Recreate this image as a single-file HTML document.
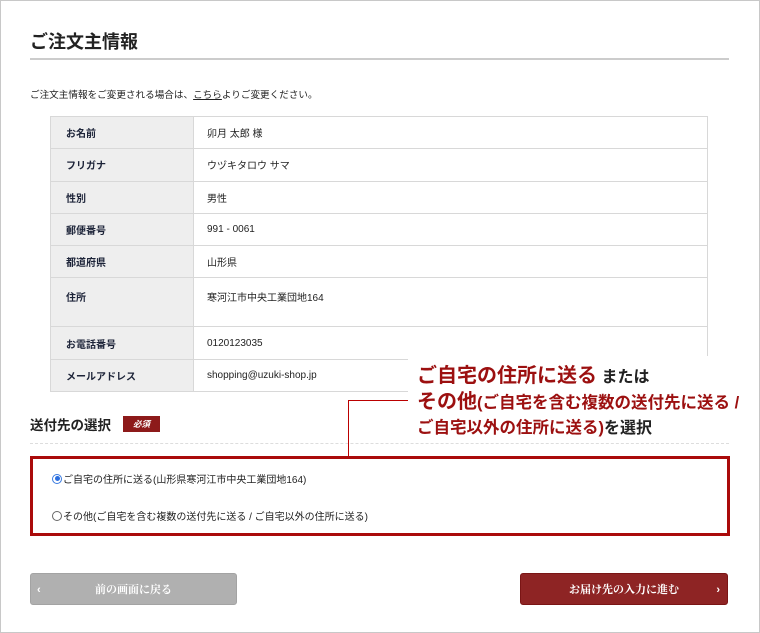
<!DOCTYPE html>
<html><head><meta charset="utf-8"><style>
*{margin:0;padding:0;box-sizing:border-box}
body{width:760px;height:633px;background:#fff;font-family:"Liberation Sans","Noto Sans CJK JP",sans-serif;color:#222;position:relative;overflow:hidden}
.frame{position:absolute;left:0;top:0;width:760px;height:633px;border:1px solid #c8c8c8}
h1{position:absolute;left:30px;top:28px;font-size:18px;font-weight:bold;color:#222}
.hr{position:absolute;left:30px;top:58px;width:699px;height:2px;background:#ccc}
.note{position:absolute;left:30px;top:87px;font-size:9.6px}
.note u{text-decoration:underline}
table{position:absolute;left:50px;top:116px;width:658px;border-collapse:collapse;font-size:10px}
td{border:1px solid #d8d8d8;height:32.3px;padding:0 0 0 13px;vertical-align:middle}
td.l{width:143px;background:#eee;font-weight:bold;color:#1c2338;padding-left:15px;font-size:10px}
tr.tall td{height:49px;vertical-align:top;padding-top:11px}
.callout{position:absolute;left:408px;top:356px;width:310px;height:86px;background:#fff}
.ct{position:absolute;left:417px;top:364px;font-weight:bold;color:#9c1010;line-height:25px;white-space:nowrap}
.ct .b{font-size:20px}
.ct .s{font-size:16.5px}
.ct .k{color:#222;font-size:16px}
.sec{position:absolute;left:30px;top:414px;font-size:13.5px;font-weight:bold}
.badge{position:absolute;left:123px;top:416px;width:37px;height:16px;background:#8d1a1a;color:#fff;font-size:8.5px;font-weight:bold;text-align:center;line-height:16px;font-style:italic}
.dash{position:absolute;left:30px;top:443px;width:699px;border-top:1px dashed #ddd}
.box{position:absolute;left:30px;top:456px;width:700px;height:80px;border:3px solid #aa0a0a}
.vl{position:absolute;left:348px;top:400px;width:1px;height:57px;background:#b00}
.hl{position:absolute;left:348px;top:400px;width:60px;height:1px;background:#b00}
.opt{position:absolute;left:52px;font-size:10px;display:flex;align-items:center}
.rad{width:10px;height:10px;border:1px solid #666;border-radius:50%;margin-right:1px;position:relative;background:#fff}
.rad.on{border-color:#3a7be0}
.rad.on::after{content:"";position:absolute;left:1.5px;top:1.5px;width:5px;height:5px;border-radius:50%;background:#2a6ee0}
.btn{position:absolute;top:573px;height:32px;border-radius:3px;color:#fff;font-family:"Liberation Serif","Noto Serif CJK SC",serif;font-weight:bold;font-size:11px;text-align:center;line-height:32px}
.back{left:30px;width:207px;background:#b0b0b0;border:1px solid #a3a3a3}
.next{left:520px;width:208px;background:#8e2424;border:1px solid #7a1515}
.arr{position:absolute;top:0;font-size:11px;font-family:"Liberation Sans",sans-serif}
</style></head><body>
<div class="frame"></div>
<h1>ご注文主情報</h1>
<div class="hr"></div>
<div class="note">ご注文主情報をご変更される場合は、<u>こちら</u>よりご変更ください。</div>
<table>
<tr><td class="l">お名前</td><td>卯月 太郎 様</td></tr>
<tr><td class="l">フリガナ</td><td>ウヅキタロウ サマ</td></tr>
<tr><td class="l">性別</td><td>男性</td></tr>
<tr><td class="l">郵便番号</td><td>991 - 0061</td></tr>
<tr><td class="l">都道府県</td><td>山形県</td></tr>
<tr class="tall"><td class="l">住所</td><td>寒河江市中央工業団地164</td></tr>
<tr><td class="l">お電話番号</td><td>0120123035</td></tr>
<tr><td class="l">メールアドレス</td><td>shopping@uzuki-shop.jp</td></tr>
</table>
<div class="callout"></div>
<div class="ct"><span class="b">ご自宅の住所に送る</span> <span class="k">または</span><br><span class="b">その他</span><span class="s">(ご自宅を含む複数の送付先に送る /</span><br><span class="s">ご自宅以外の住所に送る)</span><span class="k">を選択</span></div>
<div class="sec">送付先の選択</div>
<div class="badge">必須</div>
<div class="dash"></div>
<div class="vl"></div><div class="hl"></div>
<div class="box"></div>
<div class="opt" style="top:471px"><span class="rad on"></span>ご自宅の住所に送る(山形県寒河江市中央工業団地164)</div>
<div class="opt" style="top:508px"><span class="rad"></span>その他(ご自宅を含む複数の送付先に送る / ご自宅以外の住所に送る)</div>
<div class="btn back"><span class="arr" style="left:6px">‹</span>前の画面に戻る</div>
<div class="btn next">お届け先の入力に進む<span class="arr" style="right:7px">›</span></div>
</body></html>
